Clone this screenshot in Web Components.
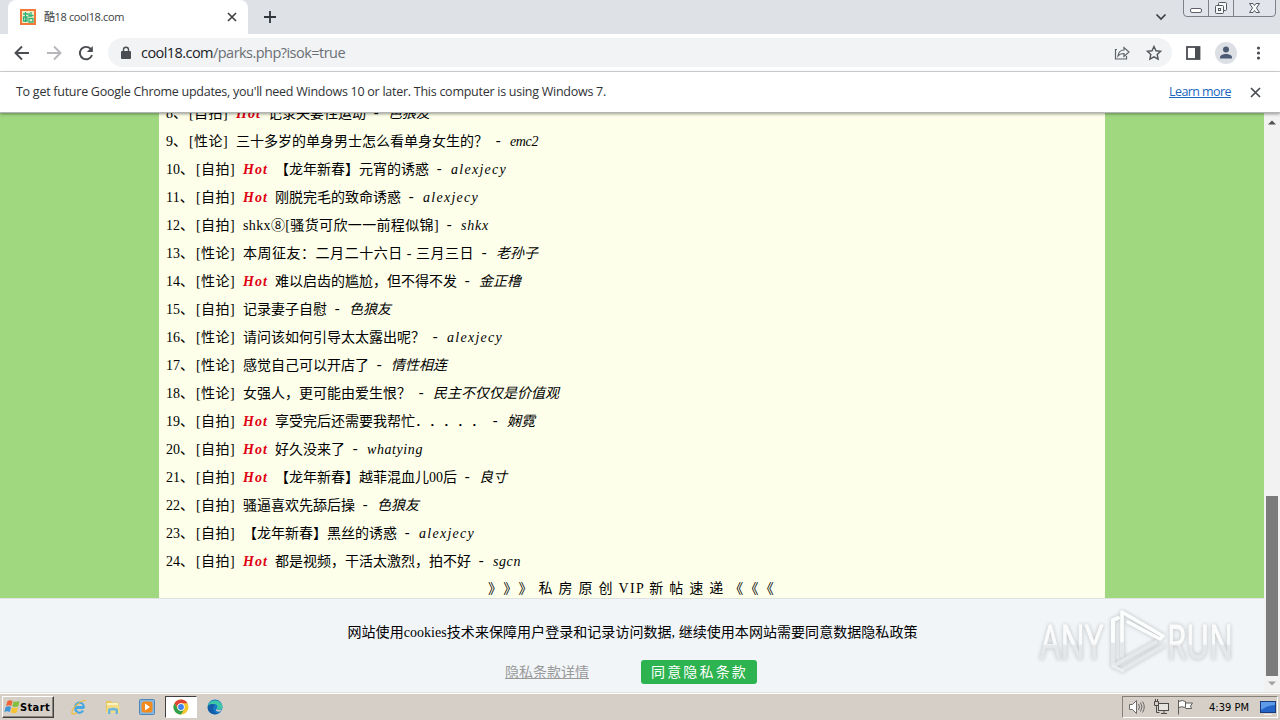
<!DOCTYPE html>
<html lang="zh-CN">
<head>
<meta charset="utf-8">
<title>酷18 cool18.com</title>
<style>
html, body { margin: 0; height: 100%; overflow: hidden; }
</style>
</head>
<body>
<desktop-screen></desktop-screen>
<script>
function define(name, html, setup) {
  const template = document.createElement("template");
  template.innerHTML = html;
  customElements.define(name, class extends HTMLElement {
    constructor() {
      super();
      this.attachShadow({ mode: "open" });
      this.shadowRoot.appendChild(template.content.cloneNode(true));
    }
    connectedCallback() {
      if (setup) setup.call(this, this.shadowRoot);
    }
  });
}

// text whose tracking is adjusted to fill the width in "w"
define("fit-text", `
<style>
:host { display: block; flex: none; }
span { display: inline-block; white-space: pre; text-spacing-trim: space-all; }
</style>
<span><slot></slot></span>`, function (root) {
  const w = Number(this.getAttribute("w"));
  const span = root.querySelector("span");
  const n = [...this.textContent].length;
  if (!w || !n) return;
  const natural = span.getBoundingClientRect().width;
  span.style.letterSpacing = (w - natural) / n + "px";
  this.style.width = w + "px";
});

define("caption-buttons", `
<style>
:host { display: block; width: 93px; height: 18px; }
svg { display: block; }
</style>
<svg width="93" height="18" fill="none" stroke="#7d8188">
  <path d="M.5 0v13q0 3.500 3.500 3.500h85q3.500 0 3.500-3.500v-13M25.500 0v16.500M50.500 0v16.500" fill="#e1e5eb"/>
  <rect x="7.500" y="8.500" width="11" height="4" rx="1.500" stroke="#5d6067" fill="#fff"/>
  <g stroke="#55585f" fill="#f6f7f9">
    <rect x="35.500" y="2.500" width="8" height="8" rx="1"/>
    <rect x="32.500" y="5.500" width="8" height="8" rx="1"/>
    <rect x="35.500" y="8.500" width="2" height="2"/>
    <path d="M66.500 3.500h3.500l1.500 2 1.500-2h3.500l-3 4.500 3 4.500h-3.500l-1.500-2-1.500 2h-3.500l3-4.500z"/>
  </g>
</svg>`);

define("tab-strip", `
<style>
:host { display: flex; height: 34px; background: #dee1e6; font: 11px "Open Sans", "Noto Sans CJK SC", sans-serif; color: #3c4043; }
.tab { display: flex; align-items: center; width: 240px; height: 34px; margin-left: 8px; background: #fff; border-radius: 8px 8px 0 0; }
.favicon { margin: 0 8px 0 12px; }
fit-text { margin-top: -2px; }
.close { margin-left: auto; margin-right: 11px; }
.plus { margin: 11px 0 0 16px; }
.menu { margin: 13px 16px 0 auto; }
caption-buttons { margin-right: 4px; }
</style>
<div class="tab">
  <svg class="favicon" width="16" height="16">
    <rect width="16" height="16" fill="#f2793a"/>
    <rect x="2" y="2" width="12" height="12" fill="#f4ecc4"/>
    <path d="M3 5h5M5.500 3v10M3.500 8v4h3.500v-4zM9 4v4M8.500 6.500h5M11 3v5M9 9.500h4v3.500h-4z" fill="none" stroke="#2eb37c" stroke-width="1.300"/>
  </svg>
  <fit-text w="80">酷18 cool18.com</fit-text>
  <svg class="close" width="10" height="10" stroke="#3c4043" stroke-width="1.600"><path d="M1 1l8 8M9 1l-8 8"/></svg>
</div>
<svg class="plus" width="12" height="12" stroke="#30343b" stroke-width="1.800"><path d="M6 0v12M0 6h12"/></svg>
<svg class="menu" width="12" height="8" fill="none" stroke="#3c4043" stroke-width="1.700"><path d="M1.500 1.500L6 6l4.500-4.500"/></svg>
<caption-buttons></caption-buttons>`);

define("tool-bar", `
<style>
:host { display: flex; align-items: center; box-sizing: border-box; height: 38px; padding: 0 0 0 12px; background: #fff; border-bottom: 1px solid #d5d7da; font: 14.500px "Open Sans", sans-serif; }
svg { display: block; flex: none; }
.nav { width: 20px; height: 20px; margin-right: 12px; }
.omnibox { display: flex; flex: none; align-items: center; box-sizing: border-box; width: 1064px; height: 29px; padding: 0 8px 0 12px; background: #f1f3f4; border-radius: 15px; }
.lock { margin-right: 9px; }
.path { color: #6b6f74; }
.host { color: #202124; }
.share { margin-left: auto; margin-right: 13px; }
.panel { margin-left: 14px; }
.avatar { margin: 0 12px 0 14px; }
</style>
<svg class="nav" viewBox="0 0 20 20" fill="none" stroke="#4a4d51" stroke-width="1.900"><path d="M17 10H4M10 3.500L3.500 10l6.500 6.500"/></svg>
<svg class="nav" viewBox="0 0 20 20" fill="none" stroke="#b5b7ba" stroke-width="1.900"><path d="M3 10h13M10 3.500l6.500 6.500-6.500 6.500"/></svg>
<svg class="nav" viewBox="0 0 20 20" fill="none" stroke="#4a4d51" stroke-width="1.900"><path d="M16 12a6.200 6.200 0 1 1-1.500-6.300L16 7.200"/><path d="M16.800 3v6h-6z" fill="#4a4d51" stroke="none"/></svg>
<div class="omnibox">
  <svg class="lock" width="12" height="14"><rect x="1" y="5" width="10" height="8" rx="1" fill="#4a4d51"/><path d="M3.500 6V3.800a2.500 2.500 0 0 1 5 0V6" fill="none" stroke="#4a4d51" stroke-width="1.400"/></svg>
  <fit-text class="host" w="72">cool18.com</fit-text><fit-text class="path" w="132">/parks.php?isok=true</fit-text>
  <svg class="share" width="18" height="18" fill="none" stroke="#5f6368" stroke-width="1.200"><path d="M4 5.500H2.500v9.500h11v-3"/><path d="M5 12c.5-4 2.500-6 6-6V3.500l5 4.500-5 4.500V9.500c-3 0-4.500.5-6 2.500z"/></svg>
  <svg width="20" height="20" fill="none" stroke="#55585d" stroke-width="1.400"><path d="M10 3.500l2 4.300 4.600.5-3.400 3.200.9 4.600-4.100-2.300-4.100 2.300.9-4.600-3.400-3.200 4.600-.5z"/></svg>
</div>
<svg class="panel" width="15" height="14"><rect x="1" y="1" width="12.500" height="12" fill="none" stroke="#4a4d51" stroke-width="1.800"/><path d="M9 1h5v12h-5z" fill="#4a4d51"/></svg>
<svg class="avatar" width="22" height="22"><circle cx="11" cy="11" r="11" fill="#dcdfe4"/><circle cx="11" cy="7.500" r="3" fill="#4d5a74"/><path d="M5 16.500v-1.200c0-2 3-3.300 6-3.300s6 1.300 6 3.300v1.200z" fill="#4d5a74"/></svg>
<svg width="20" height="16" fill="#4a4d51"><circle cx="9.500" cy="3" r="1.600"/><circle cx="9.500" cy="8" r="1.600"/><circle cx="9.500" cy="13" r="1.600"/></svg>`);

define("info-bar", `
<style>
:host { display: flex; align-items: center; height: 40px; padding: 0 19px 0 16px; background: #fff; border-bottom: 1px solid #b3b5b5; box-shadow: 0 1px 3px #0006; position: relative; font: 12.500px "Open Sans", sans-serif; color: #303236; }
fit-text { margin-top: -2px; }
.link { margin-left: auto; color: #1a67c0; }
svg { margin-left: 19px; }
</style>
<fit-text w="590">To get future Google Chrome updates, you'll need Windows 10 or later. This computer is using Windows 7.</fit-text>
<fit-text class="link" w="62"><u>Learn more</u></fit-text>
<svg width="11" height="11" stroke="#4a4d51" stroke-width="1.700"><path d="M1 1l9 9M10 1l-9 9"/></svg>`);

// CJK glyphs take one em of 14px, everything else half of that
function cellWidth(text) {
  return [...text].reduce((sum, ch) => sum + (ch.charCodeAt(0) > 0xff ? 14 : 7), 0);
}

define("post-row", `
<style>
:host { display: flex; align-items: center; height: 28px; padding-left: 7px; }
.tag { margin: 0 8px 0 2px; }
.hot { color: #e00012; font-weight: bold; font-style: italic; margin-right: 7px; }
.dash { margin: 0 7px 0 6px; font-family: "Liberation Mono", monospace; }
.author { font-style: italic; }
</style>`, function (root) {
  const add = (text, cls, width) => {
    const el = document.createElement("fit-text");
    el.textContent = text;
    el.className = cls;
    el.setAttribute("w", width || cellWidth(text));
    root.appendChild(el);
  };
  add(this.getAttribute("no") + "、", "no");
  add("[" + this.getAttribute("tag") + "]", "tag", 39);
  if (this.hasAttribute("hot")) add("Hot", "hot", 25);
  add(this.getAttribute("subject"), "title");
  add("-", "dash", 9);
  add(this.getAttribute("author"), "author");
});

const posts = [
  [8, "自拍", 1, "记录夫妻性运动", "色狼友"],
  [9, "性论", 0, "三十多岁的单身男士怎么看单身女生的？", "emc2"],
  [10, "自拍", 1, "【龙年新春】元宵的诱惑", "alexjecy"],
  [11, "自拍", 1, "刚脱完毛的致命诱惑", "alexjecy"],
  [12, "自拍", 0, "shkx⑧[骚货可欣一一前程似锦]", "shkx"],
  [13, "性论", 0, "本周征友：二月二十六日 - 三月三日", "老孙子"],
  [14, "性论", 1, "难以启齿的尴尬，但不得不发", "金正橹"],
  [15, "自拍", 0, "记录妻子自慰", "色狼友"],
  [16, "性论", 0, "请问该如何引导太太露出呢？", "alexjecy"],
  [17, "性论", 0, "感觉自己可以开店了", "情性相连"],
  [18, "性论", 0, "女强人，更可能由爱生恨？", "民主不仅仅是价值观"],
  [19, "自拍", 1, "享受完后还需要我帮忙．．．．．", "娴霓"],
  [20, "自拍", 1, "好久没来了", "whatying"],
  [21, "自拍", 1, "【龙年新春】越菲混血儿00后", "良寸"],
  [22, "自拍", 0, "骚逼喜欢先舔后操", "色狼友"],
  [23, "自拍", 0, "【龙年新春】黑丝的诱惑", "alexjecy"],
  [24, "自拍", 1, "都是视频，干活太激烈，拍不好", "sgcn"]
];

define("post-board", `
<style>
:host { display: block; height: 485px; overflow: hidden; background: #a0d880; }
main { display: flow-root; width: 946px; height: 100%; margin-left: 159px; background: #fdffea; font: 14px/20px "Liberation Serif", "Noto Sans CJK SC", serif; color: #000; }
.list { margin-top: -13px; }
.more { display: flex; padding: 3px 0 0 329px; }
</style>
<main>
  <div class="list"></div>
  <div class="more"><fit-text w="287">》》》 私 房 原 创 VIP 新 帖 速 递 《《《</fit-text></div>
</main>`, function (root) {
  const list = root.querySelector(".list");
  for (const [no, tag, hot, subject, author] of posts) {
    const row = document.createElement("post-row");
    row.setAttribute("no", no);
    row.setAttribute("tag", tag);
    if (hot) row.setAttribute("hot", "");
    row.setAttribute("subject", subject);
    row.setAttribute("author", author);
    list.appendChild(row);
  }
});

define("cookie-bar", `
<style>
:host { display: flex; flex-direction: column; align-items: center; box-sizing: border-box; height: 94px; border-top: 1px solid #dfe1e3; background: #f1f5f8; font: 14px/20px "Liberation Serif", "Noto Sans CJK SC", serif; color: #000; }
.message { height: 20px; margin: 24px 0 0 1px; }
.actions { display: flex; align-items: center; gap: 52px; margin-top: 17px; margin-left: -2px; }
.details { color: #999; padding-top: 2px; }
button { display: flex; align-items: center; width: 116px; height: 24px; padding: 2px 0 0 10px; border: 0; border-radius: 3px; background: #2db34f; color: #fff; font: inherit; }
</style>
<fit-text class="message" w="570">网站使用cookies技术来保障用户登录和记录访问数据, 继续使用本网站需要同意数据隐私政策</fit-text>
<div class="actions">
  <fit-text class="details" w="84"><u>隐私条款详情</u></fit-text>
  <button><fit-text w="97">同意隐私条款</fit-text></button>
</div>`);

define("scroll-bar", `
<style>
:host { display: flex; flex-direction: column; align-items: center; width: 16px; background: #f2f2f2; }
.up { margin-top: 7px; }
.thumb { width: 12px; height: 180px; margin-top: auto; background: #7b7b7b; }
.down { margin: 5px 0 6px; }
</style>
<svg class="up" width="8" height="5"><path d="M0 4.500L4 .5l4 4z" fill="#505050"/></svg>
<div class="thumb"></div>
<svg class="down" width="8" height="5"><path d="M0 .5l4 4 4-4z" fill="#a0a0a0"/></svg>`);

define("task-bar", `
<style>
:host { display: flex; align-items: center; box-sizing: border-box; height: 28px; padding: 1px 2px 0 2px; background: #d5cfc7; border-top: 1px solid #e4e2dd; box-shadow: inset 0 1px #fff; font: 11px "DejaVu Sans Condensed", "DejaVu Sans", sans-serif; color: #000; }
svg { display: block; flex: none; }
.start { display: flex; align-items: center; box-sizing: border-box; width: 52px; height: 22px; padding-left: 1px; border: 1px solid; border-color: #fff #404040 #404040 #fff; box-shadow: inset -1px -1px #8a867e; font-weight: bold; }
.apps { display: flex; align-items: center; margin-left: 17px; }
.app { margin-right: 18px; }
.active { display: flex; justify-content: center; align-items: center; box-sizing: border-box; width: 32px; height: 22px; margin: 0 10px 0 -8px; background: #fff; border: 1px solid; border-color: #404040 #fff #fff #404040; }
.tray { display: flex; align-items: center; box-sizing: border-box; width: 156px; height: 22px; margin-left: auto; padding-left: 5px; border: 1px solid; border-color: #858179 #fff #fff #858179; }
.tray svg { margin-right: 7px; }
.clock { margin: 0 11px 0 8px; }
.tray .desk { margin: 0; }
</style>
<div class="start">
  <svg width="16" height="16" viewBox="0 0 16 16"><path d="M3.500 2Q6 .5 8.500 2L7.300 7Q4.500 5.500 2 7z" fill="#ee6436"/><path d="M9.500 2.200Q12 3.500 15.500 2l-1.200 5.200Q11 8.600 8.300 7.300z" fill="#83bf3f"/><path d="M1.700 8Q4.500 6.700 7 8L5.800 13Q3 11.700.3 13z" fill="#3f94d6"/><path d="M8 8.300Q11 9.600 14 8.300l-1.300 5.200Q10 14.800 6.800 13.500z" fill="#f7c431"/></svg>
  <fit-text w="30">Start</fit-text>
</div>
<div class="apps">
  <svg class="app" width="16" height="16" fill="none"><path d="M13 9H4.500a4 4 0 0 0 7.500 2.500M4.200 8a4.300 4.300 0 0 1 8.600 0z" stroke="#45a8e2" stroke-width="2.200"/><path d="M1.500 15C-1 12 8 1 15 1.500M1.500 15c1 .3 3-.3 4.500-1.500" stroke="#efbd3b" stroke-width="1.200"/></svg>
  <svg class="app" width="16" height="16"><path d="M1 2h5l1 1.500h6.500V13H1z" fill="#e8c65e"/><path d="M2 4h11v3H2z" fill="#fbf3bf"/><path d="M2.500 6h11.500l1 8H1.500z" fill="#f4dc87"/><path d="M3 15V10q5-2.500 10 0v5h-2.500v-3.500h-5V15z" fill="#6cb6dd"/></svg>
  <svg class="app" width="16" height="16"><rect x=".5" y=".5" width="15" height="15" rx="1" fill="#8ab6dc" stroke="#4d86b9"/><rect x="2.500" y="2.500" width="11" height="11" rx="3" fill="#f28a1c"/><path d="M6 4.500l5 3.500-5 3.500z" fill="#fff"/></svg>
  <div class="active">
    <svg width="16" height="16" viewBox="0 0 16 16"><circle cx="8" cy="8" r="7.500" fill="#f5c62d"/><path d="M1.500 4.250A7.500 7.500 0 0 1 14.500 4.250H8a3.700 3.700 0 0 0-3.200 5.600z" fill="#df4337"/><path d="M1.500 4.250A7.500 7.500 0 0 0 8 15.500l3.200-5.600a3.700 3.700 0 0 1-6.400 0z" fill="#2ea14e"/><circle cx="8" cy="8" r="3.700" fill="#fff"/><circle cx="8" cy="8" r="2.900" fill="#4083ee"/></svg>
  </div>
  <svg width="16" height="16" viewBox="0 0 16 16"><circle cx="8" cy="8" r="7.500" fill="#1778c6"/><path d="M.8 7A7.500 7.500 0 0 1 15.500 8c0 3-4.500 3.500-6 2 2-2.500.5-5-2.500-5C4 5 2 6 .8 7z" fill="#3ec7a5"/><path d="M1 7.500C2.500 4.500 6 4.500 8 6 5 7 5 13 11 14.500 6 17-.5 13 1 7.500z" fill="#135da8"/><path d="M9.500 10c1.500 1.500 4.500 1.500 5.500.3-.5 1.700-2 2.700-4 2.300-2-.3-2.500-1.600-1.500-2.600z" fill="#d5cfc7"/></svg>
</div>
<div class="tray">
  <svg width="18" height="16" fill="#fff" stroke="#6c6a66"><path d="M1.500 5.500h3l4-4v13l-4-4h-3z"/><path d="M10.500 5q2 3 0 6M12.500 3.500q3 4.500 0 9M14.500 2.500q3.500 5.500 0 11" fill="none"/></svg>
  <svg width="17" height="16" fill="none" stroke="#4c4b48"><rect x="5.500" y="4.500" width="10" height="7" fill="#e6e4df"/><path d="M8 14.500h6M11 12v2M1.500 2.500h4v4h-4zM2.500 0v2M4.500 0v2M3.500 6.500v7h3"/></svg>
  <svg width="17" height="16" fill="#fff" stroke="#5f5d58"><path d="M1.500 1v14.500M1.500 2.500q4-2 7 0v6q-4-1.500-7 0zM8.500 4h7l-2 3 1 2.500H8.500"/></svg>
  <fit-text class="clock" w="40">4:39 PM</fit-text>
  <svg class="desk" width="16" height="15"><rect x=".5" y="1.500" width="15" height="11" fill="#2564c7" stroke="#183c7b"/><path d="M1 2h14v3Q8 5 1 10z" fill="#5d9ae8"/><path d="M4 14.500h8" stroke="#eee"/></svg>
</div>`);

define("run-watermark", `
<style>
:host { display: block; position: absolute; left: 1034px; top: 604px; }
svg { display: block; filter: drop-shadow(0 0 2px #0004); opacity: .85; }
text { font: 48px "Open Sans", sans-serif; fill: url(#fade); stroke: url(#fade); stroke-width: 1; }
</style>
<svg width="204" height="76">
  <defs><linearGradient id="fade" x1="0" y1="0" x2="0" y2="1"><stop offset="0" stop-color="#fff"/><stop offset=".55" stop-color="#fcfcfc"/><stop offset=".58" stop-color="#e4e6e8"/><stop offset="1" stop-color="#dfe1e3"/></linearGradient></defs>
  <text transform="translate(6 55) scale(.7 1)" textLength="90" lengthAdjust="spacingAndGlyphs">ANY</text>
  <text transform="translate(133 55) scale(.7 1)" textLength="94" lengthAdjust="spacingAndGlyphs">RUN</text>
  <g fill="none" stroke-width="4" stroke-linejoin="round" stroke-linecap="round">
    <path d="M79 37v25l43-24" stroke="#e4e6e8"/>
    <path d="M84 14l-5 2v21" stroke="#fff"/>
    <path d="M88 66l41-24M88 52V37" stroke="#e4e6e8"/>
    <path d="M88 37V8l41 24-3 3-32-17" stroke="#fff" stroke-width="3.500"/>
    <path d="M79 62l10 5" stroke="#eceeef" stroke-width="3"/>
  </g>
</svg>`);

define("desktop-screen", `
<style>
:host { display: flex; flex-direction: column; width: 1280px; height: 720px; overflow: hidden; }
.view { display: flex; height: 579px; }
.page { width: 1264px; }
</style>
<tab-strip></tab-strip>
<tool-bar></tool-bar>
<info-bar></info-bar>
<div class="view">
  <div class="page">
    <post-board></post-board>
    <cookie-bar></cookie-bar>
  </div>
  <scroll-bar></scroll-bar>
</div>
<task-bar></task-bar>
<run-watermark></run-watermark>`);
</script>
</body>
</html>
